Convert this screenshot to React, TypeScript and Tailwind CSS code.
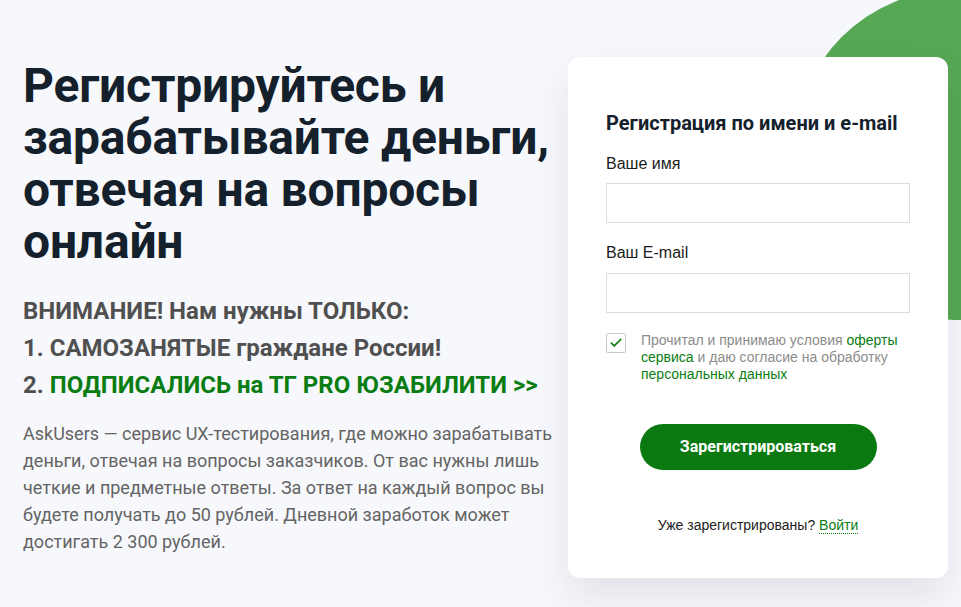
import { Check } from "lucide-react";

export default function App() {
  return (
    <div className="relative w-[961px] h-[607px] overflow-hidden bg-[#f7f8fc] font-['Roboto',sans-serif]">
      <div className="absolute left-[795px] top-[-10px] w-[320px] h-[330px] rounded-full bg-[#57a855]" />

      <div className="relative flex h-full pt-[57px]">
        <div className="w-[568px] shrink-0 pl-[23px] pr-[10px] pt-[3px]">
          <h1 className="text-[48px] leading-[52px] font-bold text-[#14202b] tracking-[-0.2px]">
            Регистрируйтесь и зарабатывайте деньги, отвечая на вопросы онлайн
          </h1>
          <div className="mt-[25px] text-[24px] leading-[37px] font-bold text-[#505050]">
            <p>ВНИМАНИЕ! Нам нужны ТОЛЬКО:</p>
            <p>1. САМОЗАНЯТЫЕ граждане России!</p>
            <p>
              2. <a className="text-[#0a7d12]">ПОДПИСАЛИСЬ на ТГ PRO ЮЗАБИЛИТИ &gt;&gt;</a>
            </p>
          </div>
          <p className="mt-[16px] text-[18px] leading-[27px] text-[#646464]">
            AskUsers — сервис UX-тестирования, где можно зарабатывать деньги, отвечая на вопросы заказчиков. От вас нужны лишь четкие и предметные ответы. За ответ на каждый вопрос вы будете получать до 50 рублей. Дневной заработок может достигать 2 300 рублей.
          </p>
        </div>

        <div className="w-[380px] h-[521px] shrink-0 rounded-[12px] bg-white shadow-[0_20px_40px_rgba(40,50,80,0.10)] px-[38px] pt-[53px] font-['Liberation_Sans',Arial,sans-serif]">
          <h2 className="text-[20px] leading-[26px] font-bold text-[#14202b] font-['Roboto',sans-serif]">
            Регистрация по имени и e-mail
          </h2>
          <label className="block mt-[18px] text-[16px] leading-[20px] text-[#1c1c1c]">Ваше имя</label>
          <input className="block mt-[9px] w-[304px] h-[40px] border border-[#dcdcdc] bg-white outline-none" />
          <label className="block mt-[20px] text-[16px] leading-[20px] text-[#1c1c1c]">Ваш E-mail</label>
          <input className="block mt-[10px] w-[304px] h-[40px] border border-[#dcdcdc] bg-white outline-none" />

          <div className="flex gap-[15px] mt-[19px]">
            <div className="mt-[1px] w-[20px] h-[20px] shrink-0 border border-[#c8c8c8] rounded-[2px] flex items-center justify-center">
              <Check className="w-[14px] h-[14px] text-[#0a7d12]" strokeWidth={3} />
            </div>
            <p className="text-[14px] leading-[17px] text-[#8c8c8c]">
              Прочитал и принимаю условия <a className="text-[#0a7d12]">оферты сервиса</a> и даю согласие на обработку{" "}
              <a className="text-[#0a7d12]">персональных данных</a>
            </p>
          </div>

          <div className="flex justify-center mt-[41px]">
            <button className="w-[237px] h-[46px] rounded-full bg-[#0a7a10] text-white text-[16px] font-bold font-['Roboto',sans-serif]">
              Зарегистрироваться
            </button>
          </div>

          <p className="mt-[46px] text-center text-[14px] leading-[18px] text-[#1c1c1c]">
            Уже зарегистрированы?{" "}
            <a className="text-[#0a7d12] border-b border-dotted border-[#0a7d12]">Войти</a>
          </p>
        </div>
      </div>
    </div>
  );
}
